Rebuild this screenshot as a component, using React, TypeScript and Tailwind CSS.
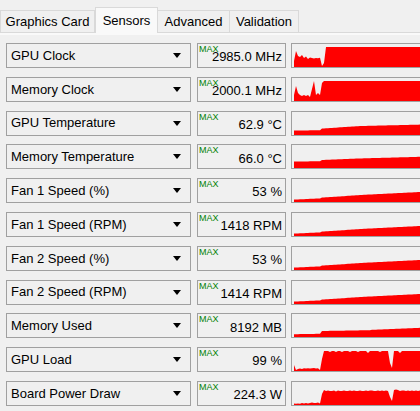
import React from 'react';

type Row = { name: string; value: string; graph: number[] };

// graph values: 0..1 heights, sampled evenly across the visible graph
const low = (a: number, b: number, n: number) =>
  Array.from({ length: n }, (_, i) => a + ((b - a) * i) / (n - 1));

const rows: Row[] = [
  {
    name: 'GPU Clock',
    value: '2985.0 MHz',
    graph: [0.3, 0.8, 0.55, 0.5, 0.6, 0.45, 0.52, 0.4, 0.48, 0.45, 0.42, 0.45, 0.44, 0.46, 0.05, 0.2, 1, 1, 1, 1, 1, 1, 1, 1, 1, 1, 1, 1, 1, 1, 1, 1, 1, 1, 1, 1, 1, 1, 1, 1, 1, 1, 1, 1, 1, 1, 1, 1, 1, 1, 1, 1, 1, 1, 1, 1, 1, 1, 1, 1, 1, 1, 1, 1],
  },
  {
    name: 'Memory Clock',
    value: '2000.1 MHz',
    graph: [0.3, 0.75, 0.4, 0.3, 0.25, 0.3, 0.25, 0.3, 0.2, 0.6, 1, 0.3, 0.4, 0.3, 0.9, 1, 1, 1, 1, 1, 1, 1, 1, 1, 1, 1, 1, 1, 1, 1, 1, 1, 1, 1, 1, 1, 1, 1, 1, 1, 1, 1, 1, 1, 1, 1, 1, 1, 1, 1, 1, 1, 1, 1, 1, 1, 1, 1, 1, 1, 1, 1, 1, 1],
  },
  {
    name: 'GPU Temperature',
    value: '62.9 °C',
    graph: [...low(0.22, 0.24, 14), ...low(0.32, 0.45, 20), ...low(0.45, 0.52, 30)],
  },
  {
    name: 'Memory Temperature',
    value: '66.0 °C',
    graph: [...low(0.32, 0.34, 14), ...low(0.4, 0.48, 20), ...low(0.48, 0.56, 30)],
  },
  {
    name: 'Fan 1 Speed (%)',
    value: '53 %',
    graph: [...low(0.12, 0.18, 14), ...low(0.22, 0.38, 25), ...low(0.38, 0.5, 25)],
  },
  {
    name: 'Fan 1 Speed (RPM)',
    value: '1418 RPM',
    graph: [...low(0.12, 0.18, 14), ...low(0.22, 0.38, 25), ...low(0.38, 0.5, 25)],
  },
  {
    name: 'Fan 2 Speed (%)',
    value: '53 %',
    graph: [...low(0.12, 0.18, 14), ...low(0.22, 0.38, 25), ...low(0.38, 0.5, 25)],
  },
  {
    name: 'Fan 2 Speed (RPM)',
    value: '1414 RPM',
    graph: [...low(0.12, 0.18, 14), ...low(0.22, 0.38, 25), ...low(0.38, 0.5, 25)],
  },
  {
    name: 'Memory Used',
    value: '8192 MB',
    graph: [...low(0.14, 0.16, 14), ...low(0.3, 0.34, 25), ...low(0.36, 0.46, 25)],
  },
  {
    name: 'GPU Load',
    value: '99 %',
    graph: [0.3, 0.05, 0.1, 0.12, 0.1, 0.14, 0.12, 0.14, 0.12, 0.14, 0.15, 0.12, 0.14, 0.05, 0.6, 1, 1, 1, 0.95, 1, 1, 0.95, 1, 1, 0.95, 1, 1, 1, 0.95, 1, 1, 1, 0.95, 1, 1, 1, 1, 0.9, 1, 1, 1, 1, 1, 0.95, 1, 1, 1, 1, 0.4, 0.15, 1, 1, 1, 0.9, 1, 1, 1, 1, 1, 1, 1, 1, 1, 1],
  },
  {
    name: 'Board Power Draw',
    value: '224.3 W',
    graph: [0.08, 0.06, 0.08, 0.06, 0.1, 0.08, 0.1, 0.08, 0.1, 0.12, 0.1, 0.1, 0.12, 0.08, 0.55, 0.75, 0.7, 0.72, 0.7, 0.7, 0.72, 0.68, 0.72, 0.7, 0.7, 0.72, 0.7, 0.7, 0.72, 0.7, 0.72, 0.7, 0.7, 0.72, 0.7, 0.7, 0.72, 0.7, 0.72, 0.72, 0.7, 0.7, 0.72, 0.7, 0.72, 0.7, 0.72, 0.7, 0.4, 0.2, 0.75, 0.78, 0.75, 0.7, 0.72, 0.72, 0.7, 0.72, 0.7, 0.72, 0.7, 0.72, 0.7, 0.72],
  },
];

const Graph = ({ data }: { data: number[] }) => {
  const w = 130;
  const h = 20;
  const step = w / (data.length - 1);
  const pts = data.map((v, i) => `${(i * step).toFixed(2)},${(h - v * h).toFixed(2)}`).join(' ');
  return (
    <svg width={w} height={h} viewBox={`0 0 ${w} ${h}`} preserveAspectRatio="none" className="block">
      <polygon points={`0,${h} ${pts} ${w},${h}`} fill="#ff0000" />
    </svg>
  );
};

const tabs = [
  { label: 'Graphics Card', w: 'w-[95px]' },
  { label: 'Sensors', w: 'w-[63px]' },
  { label: 'Advanced', w: 'w-[73px]' },
  { label: 'Validation', w: 'w-[70px]' },
];

export default function App() {
  return (
    <div
      className="w-[420px] h-[411px] overflow-hidden bg-[#f0f0f0] text-black"
      style={{ fontFamily: '"Liberation Sans", Arial, sans-serif' }}
    >
      <div className="flex items-end h-[33px] pl-0 border-b border-[#d9d9d9]">
        {tabs.map((t) =>
          t.label === 'Sensors' ? (
            <div
              key={t.label}
              className={`${t.w} h-[26px] -mb-px bg-[#f9f9f9] border border-b-0 border-[#d9d9d9] flex items-start justify-center pt-[3px] text-[13px] relative z-10`}
            >
              {t.label}
            </div>
          ) : (
            <div
              key={t.label}
              className={`${t.w} h-[22px] bg-[#f0f0f0] border border-b-0 border-[#d9d9d9] -ml-px first:ml-0 flex items-center justify-center pt-[1px] text-[13px]`}
            >
              {t.label}
            </div>
          )
        )}
      </div>
      <div className="bg-[#f9f9f9] h-[2px]" />
      <div className="flex flex-col gap-[8.8px] pt-[8px]">
        {rows.map((r) => (
          <div key={r.name} className="flex h-[25px]">
            <div className="ml-[6px] w-[185px] h-full border border-[#a0a0a0] flex items-center justify-between pl-[4px] pr-[9px] text-[13px]">
              <span>{r.name}</span>
              <span className="w-0 h-0 border-l-[4px] border-r-[4px] border-t-[5px] border-l-transparent border-r-transparent border-t-black" />
            </div>
            <div className="ml-[6px] w-[89px] h-full border border-[#a0a0a0] relative flex items-center justify-end pr-[3px] pt-[3px] text-[13px]">
              <span className="absolute left-[1px] top-0 text-[9px] leading-[10px] text-[#008000]">MAX</span>
              <span className="relative">{r.value}</span>
            </div>
            <div className="ml-[5px] flex-1 h-full border border-r-0 border-[#a0a0a0] pl-[2px] pt-[3px] overflow-hidden flex items-end">
              <Graph data={r.graph} />
            </div>
          </div>
        ))}
      </div>
    </div>
  );
}
